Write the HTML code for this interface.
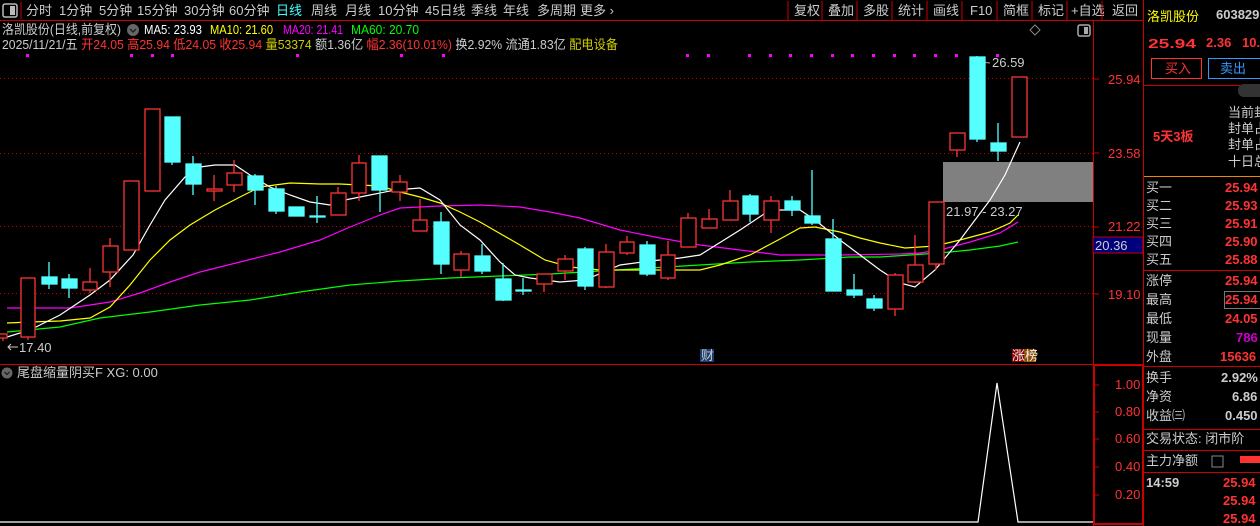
<!DOCTYPE html>
<html><head><meta charset="utf-8"><style>
html,body{margin:0;padding:0;background:#000;width:1260px;height:526px;overflow:hidden}
svg{display:block}
text{font-family:"Liberation Sans","Noto Sans CJK SC",sans-serif;font-size:13px}
</style></head><body>
<svg width="1260" height="526" viewBox="0 0 1260 526" xmlns="http://www.w3.org/2000/svg">
<rect width="1260" height="526" fill="#000"/>
<rect x="3" y="4" width="14" height="13" rx="2" fill="none" stroke="#bbb" stroke-width="1.5"/><rect x="10" y="6" width="5" height="9" fill="#bbb"/>
<line x1="21" y1="2" x2="21" y2="19" stroke="#c00"/>
<g fill="#ccc">
<text x="26" y="15">分时</text><text x="59" y="15">1分钟</text><text x="99" y="15">5分钟</text><text x="137" y="15">15分钟</text><text x="184" y="15">30分钟</text><text x="229" y="15">60分钟</text><text x="276" y="15" fill="#4ff">日线</text><text x="311" y="15">周线</text><text x="345" y="15">月线</text><text x="378" y="15">10分钟</text><text x="425" y="15">45日线</text><text x="471" y="15">季线</text><text x="503" y="15">年线</text><text x="537" y="15">多周期</text><text x="580" y="15">更多 ›</text>
<text x="794" y="15">复权</text><text x="828" y="15">叠加</text><text x="863" y="15">多股</text><text x="898" y="15">统计</text><text x="933" y="15">画线</text><text x="970" y="15">F10</text><text x="1003" y="15">简框</text><text x="1038" y="15">标记</text><text x="1071" y="15">+自选</text><text x="1112" y="15">返回</text>
</g>
<g stroke="#c00"><line x1="788" y1="1" x2="788" y2="20"/><line x1="822" y1="1" x2="822" y2="20"/><line x1="857" y1="1" x2="857" y2="20"/><line x1="892" y1="1" x2="892" y2="20"/><line x1="927" y1="1" x2="927" y2="20"/><line x1="962" y1="1" x2="962" y2="20"/><line x1="997" y1="1" x2="997" y2="20"/><line x1="1032" y1="1" x2="1032" y2="20"/><line x1="1067" y1="1" x2="1067" y2="20"/><line x1="1102" y1="1" x2="1102" y2="20"/></g>
<line x1="0" y1="20.5" x2="1144" y2="20.5" stroke="#c00"/>
<text x="2" y="34" fill="#ccc" textLength="119" lengthAdjust="spacingAndGlyphs">洛凯股份(日线,前复权)</text>
<circle cx="133" cy="30" r="6" fill="#666"/><path d="M130 29 L133 32 L136 29" stroke="#222" fill="none" stroke-width="1.5"/>
<text x="144" y="34" fill="#fff" textLength="58" lengthAdjust="spacingAndGlyphs">MA5: 23.93</text>
<text x="210" y="34" fill="#ff0" textLength="63" lengthAdjust="spacingAndGlyphs">MA10: 21.60</text>
<text x="283" y="34" fill="#f0f" textLength="60" lengthAdjust="spacingAndGlyphs">MA20: 21.41</text>
<text x="351" y="34" fill="#0f0" textLength="68" lengthAdjust="spacingAndGlyphs">MA60: 20.70</text>
<text x="2" y="49" fill="#ccc" textLength="616" lengthAdjust="spacingAndGlyphs">2025/11/21/五 <tspan fill="#f33">开24.05 高25.94 低24.05 收25.94</tspan> <tspan fill="#cc0">量53374</tspan> 额1.36亿 <tspan fill="#f33">幅2.36(10.01%)</tspan> 换2.92% 流通1.83亿 <tspan fill="#cc0">配电设备</tspan></text>
<path d="M1030 30 L1035 25 L1040 30 L1035 35 Z" fill="none" stroke="#888"/>
<rect x="1078" y="25" width="12" height="11" rx="2" fill="none" stroke="#aaa" stroke-width="1.5"/><rect x="1084" y="27" width="4" height="7" fill="#aaa"/>
<g fill="#f0f"><rect x="26" y="54" width="3" height="3"/><rect x="130" y="54" width="3" height="3"/><rect x="151" y="54" width="3" height="3"/><rect x="171" y="54" width="3" height="3"/><rect x="296" y="54" width="3" height="3"/><rect x="400" y="54" width="3" height="3"/><rect x="442" y="54" width="3" height="3"/><rect x="686" y="54" width="3" height="3"/><rect x="707" y="54" width="3" height="3"/><rect x="748" y="54" width="3" height="3"/><rect x="769" y="54" width="3" height="3"/><rect x="789" y="54" width="3" height="3"/><rect x="810" y="54" width="3" height="3"/><rect x="831" y="54" width="3" height="3"/><rect x="851" y="54" width="3" height="3"/><rect x="872" y="54" width="3" height="3"/><rect x="893" y="54" width="3" height="3"/><rect x="913" y="54" width="3" height="3"/><rect x="934" y="54" width="3" height="3"/><rect x="955" y="54" width="3" height="3"/><rect x="996" y="54" width="3" height="3"/></g>
<g stroke="#c00" stroke-dasharray="1,3"><line x1="0" y1="78.5" x2="1093" y2="78.5"/><line x1="0" y1="153.5" x2="1093" y2="153.5"/><line x1="0" y1="226.5" x2="1093" y2="226.5"/><line x1="0" y1="293.5" x2="1093" y2="293.5"/></g>
<rect x="943" y="162" width="150" height="40" fill="#808080"/>
<text x="946" y="216" fill="#ccc">21.97 - 23.27</text>
<text x="992" y="67" fill="#ccc">26.59</text><path d="M980 62 L990 63" stroke="#aaa"/><path d="M982 59 L979 62 L982 65" stroke="#aaa" fill="none"/>
<text x="19" y="352" fill="#ccc">17.40</text><path d="M8 347 L18 347 M11 344 L8 347 L11 350" stroke="#ccc" fill="none"/>
<g fill="none" stroke-width="1.2">
<polyline stroke="#0f0" points="7,332 60,327 100,318 150,312 200,305 250,300 300,292 350,285 400,281 450,278 500,276 550,274 600,271 650,268 700,265 750,262 800,260 850,257 880,257 910,255 940,253 970,250 1000,246 1018,242"/>
<polyline stroke="#f0f" points="7,308 70,308 110,302 140,293 170,282 200,272 240,262 280,252 320,240 350,227 380,215 400,208 440,206 480,205 520,207 550,212 580,218 620,230 660,238 700,245 740,250 780,255 840,255 900,254 920,253 940,250 970,242 1000,233 1018,222"/>
<polyline stroke="#ff0" points="7,323 30,322 60,321 90,318 110,307 130,285 150,260 170,240 190,225 215,210 240,197 260,187 290,183 320,184 340,184 380,186 400,192 420,197 440,203 460,212 480,222 520,245 545,260 570,267 600,270 640,270 700,270 720,265 750,255 780,239 800,228 815,227 840,232 860,238 880,243 905,248 935,246 960,240 990,232 1010,223 1018,215"/>
<polyline stroke="#fff" points="7,337 30,330 60,315 90,295 110,280 133,255 150,225 165,200 185,177 200,167 215,165 235,165 250,175 270,187 290,195 310,202 330,205 345,200 365,196 395,190 420,188 440,200 460,225 480,240 500,262 515,275 530,278 560,282 585,280 620,265 650,261 680,258 700,255 740,230 770,210 800,210 815,220 840,240 860,255 880,270 900,283 915,287 935,270 960,240 990,200 1005,175 1020,142"/>
</g>
<g stroke="#f33" fill="#000" stroke-width="1.3">
<path d="M3 334V341M28 337V340M90 268V293M110 238V287M131 181V250M152 109V191M214 175V201M234 160V192M338 187V215M359 155V201M400 175V201M420 199V231M461 251V277M544 284V292M565 255V280M606 244V288M627 236V255M668 241V280M688 213V247M709 209V228M730 190V220M771 196V233M895 273V316M915 235V283M936 264V270M957 150V157" fill="none"/>
<rect x="-2" y="334" width="9" height="4"/><rect x="21" y="278" width="14" height="59"/><rect x="83" y="282" width="14" height="8"/><rect x="103" y="246" width="15" height="26"/><rect x="124" y="181" width="15" height="69"/><rect x="145" y="109" width="15" height="82"/><rect x="207" y="189" width="15" height="2"/><rect x="227" y="173" width="15" height="12"/><rect x="331" y="193" width="15" height="22"/><rect x="352" y="163" width="14" height="30"/><rect x="392" y="182" width="15" height="10"/><rect x="413" y="220" width="14" height="11"/><rect x="454" y="254" width="15" height="16"/><rect x="537" y="274" width="15" height="10"/><rect x="558" y="259" width="15" height="12"/><rect x="599" y="252" width="15" height="35"/><rect x="620" y="242" width="14" height="11"/><rect x="661" y="255" width="14" height="23"/><rect x="681" y="218" width="15" height="29"/><rect x="702" y="219" width="15" height="9"/><rect x="723" y="201" width="15" height="19"/><rect x="764" y="201" width="15" height="19"/><rect x="888" y="275" width="15" height="34"/><rect x="908" y="265" width="15" height="17"/><rect x="929" y="202" width="15" height="62"/><rect x="950" y="133" width="15" height="17"/><rect x="1012" y="77" width="15" height="60"/>
</g>
<g stroke="#5ff" fill="#5ff" stroke-width="1.3">
<path d="M49 262V289M69 274V298M172 117V165M193 156V195M255 174V205M276 186V214M296 207V216M317 196V223M380 156V212M441 212V274M482 244V274M503 263V301M523 278V295M585 247V290M647 241V276M750 194V222M792 196V216M812 170V225M833 219V291M854 274V298M874 295V311M977 56V142M998 123V161" fill="none"/>
<rect x="42" y="277" width="15" height="7"/><rect x="62" y="279" width="15" height="9"/><rect x="165" y="117" width="15" height="45"/><rect x="186" y="164" width="15" height="20"/><rect x="248" y="176" width="15" height="14"/><rect x="269" y="189" width="15" height="22"/><rect x="289" y="207" width="15" height="9"/><rect x="310" y="216" width="15" height="1"/><rect x="372" y="156" width="15" height="34"/><rect x="434" y="222" width="15" height="42"/><rect x="475" y="256" width="15" height="15"/><rect x="496" y="279" width="15" height="21"/><rect x="516" y="290" width="15" height="1"/><rect x="578" y="249" width="15" height="37"/><rect x="640" y="245" width="15" height="29"/><rect x="743" y="196" width="15" height="18"/><rect x="785" y="201" width="15" height="9"/><rect x="805" y="216" width="15" height="7"/><rect x="826" y="239" width="15" height="52"/><rect x="847" y="290" width="15" height="5"/><rect x="867" y="299" width="15" height="9"/><rect x="970" y="57" width="15" height="82"/><rect x="991" y="143" width="15" height="8"/>
</g>
<rect x="700" y="349" width="14" height="13" fill="#1a3c70"/><text x="701" y="360" fill="#ccc" font-size="12">财</text>
<rect x="1012" y="349" width="12" height="13" fill="#8b0000"/><rect x="1024" y="349" width="12" height="13" fill="#8b4a00"/><text x="1012" y="360" fill="#eee" font-size="12">涨榜</text>
<line x1="1093.5" y1="21" x2="1093.5" y2="526" stroke="#c00"/>
<line x1="1143.5" y1="0" x2="1143.5" y2="526" stroke="#c00"/>
<g stroke="#c00"><line x1="1093" y1="79" x2="1099" y2="79"/><line x1="1093" y1="153" x2="1099" y2="153"/><line x1="1093" y1="227" x2="1099" y2="227"/><line x1="1093" y1="294" x2="1099" y2="294"/></g>
<g fill="#f33" font-size="13"><text x="1108" y="84">25.94</text><text x="1108" y="158">23.58</text><text x="1108" y="231">21.22</text><text x="1108" y="299">19.10</text></g>
<rect x="1093" y="237" width="50" height="16" fill="#00007a" stroke="#c00"/><text x="1095" y="250" fill="#ccc">20.36</text>
<line x1="0" y1="364.5" x2="1143" y2="364.5" stroke="#c00"/>
<rect x="1094" y="365" width="49" height="159" fill="none" stroke="#c00" stroke-width="2"/>
<circle cx="7" cy="373" r="5.5" fill="#666"/><path d="M4.5 372 L7 374.5 L9.5 372" stroke="#222" fill="none" stroke-width="1.3"/>
<text x="17" y="377" fill="#ccc">尾盘缩量阴买F  XG: 0.00</text>
<g fill="#f33"><text x="1115" y="389">1.00</text><text x="1115" y="416">0.80</text><text x="1115" y="443">0.60</text><text x="1115" y="471">0.40</text><text x="1115" y="499">0.20</text></g>
<g stroke="#c00"><line x1="1094" y1="385" x2="1099" y2="385"/><line x1="1094" y1="412" x2="1099" y2="412"/><line x1="1094" y1="439" x2="1099" y2="439"/><line x1="1094" y1="467" x2="1099" y2="467"/><line x1="1094" y1="495" x2="1099" y2="495"/></g>
<polyline fill="none" stroke="#fff" stroke-width="1.2" points="0,522 978,522 997,383 1018,522 1093,522"/>
<text x="1147" y="21" fill="#ff0" font-size="17">洛凯股份</text><text x="1216" y="19" fill="#ccc" font-size="13" font-weight="bold">603829</text>
<text x="1148" y="48" fill="#f33" font-size="20" font-weight="bold" textLength="48" lengthAdjust="spacingAndGlyphs">25.94</text><text x="1206" y="47" fill="#f33" font-size="14" font-weight="bold">2.36</text><text x="1242" y="47" fill="#f33" font-size="14" font-weight="bold">10.</text>
<rect x="1151.5" y="58.5" width="50" height="20" fill="none" stroke="#f33"/><text x="1165" y="73" fill="#f33" font-size="13">买入</text>
<rect x="1208.5" y="58.5" width="52" height="20" fill="none" stroke="#39f"/><text x="1220" y="73" fill="#39f" font-size="13">卖出</text>
<line x1="1144" y1="85.5" x2="1260" y2="85.5" stroke="#c00"/>
<rect x="1238" y="84" width="30" height="13" rx="6" fill="#333"/>
<text x="1153" y="141" fill="#f33" font-size="15" font-weight="bold">5天3板</text>
<g fill="#ccc"><text x="1228" y="117">当前封</text><text x="1228" y="133">封单占</text><text x="1228" y="149">封单占</text><text x="1228" y="166">十日总</text></g>
<line x1="1144" y1="176.5" x2="1260" y2="176.5" stroke="#e80"/>
<g fill="#ccc" font-size="14"><text x="1146" y="192">买一</text><text x="1146" y="210">买二</text><text x="1146" y="228">买三</text><text x="1146" y="246">买四</text><text x="1146" y="264">买五</text>
<text x="1146" y="285">涨停</text><text x="1146" y="304">最高</text><text x="1146" y="323">最低</text><text x="1146" y="342">现量</text><text x="1146" y="361">外盘</text>
<text x="1146" y="382">换手</text><text x="1146" y="401">净资</text><text x="1146" y="420">收益㈢</text><text x="1146" y="443">交易状态: 闭市阶</text><text x="1146" y="465">主力净额</text></g>
<g fill="#f33" font-size="13" font-weight="bold"><text x="1225" y="192">25.94</text><text x="1225" y="210">25.93</text><text x="1225" y="228">25.91</text><text x="1225" y="246">25.90</text><text x="1225" y="264">25.88</text>
<text x="1225" y="285">25.94</text><text x="1225" y="304">25.94</text><text x="1225" y="323">24.05</text><text x="1236" y="342" fill="#c0c">786</text><text x="1220" y="361">15636</text>
<text x="1223" y="487">25.94</text><text x="1223" y="505">25.94</text><text x="1223" y="523">25.94</text></g>
<rect x="1224.5" y="291.5" width="36" height="17" fill="none" stroke="#777"/>
<g fill="#ccc" font-size="13" font-weight="bold"><text x="1221" y="382">2.92%</text><text x="1232" y="401">6.86</text><text x="1225" y="420">0.450</text><text x="1146" y="487">14:59</text></g>
<g stroke="#c00"><line x1="1144" y1="270.5" x2="1260" y2="270.5"/><line x1="1144" y1="366.5" x2="1260" y2="366.5"/><line x1="1144" y1="429.5" x2="1260" y2="429.5"/><line x1="1144" y1="450.5" x2="1260" y2="450.5"/><line x1="1144" y1="472.5" x2="1260" y2="472.5"/></g>
<rect x="1212" y="456" width="11" height="11" fill="none" stroke="#888"/><rect x="1240" y="456" width="20" height="7" fill="#f33"/>
</svg>
</body></html>
